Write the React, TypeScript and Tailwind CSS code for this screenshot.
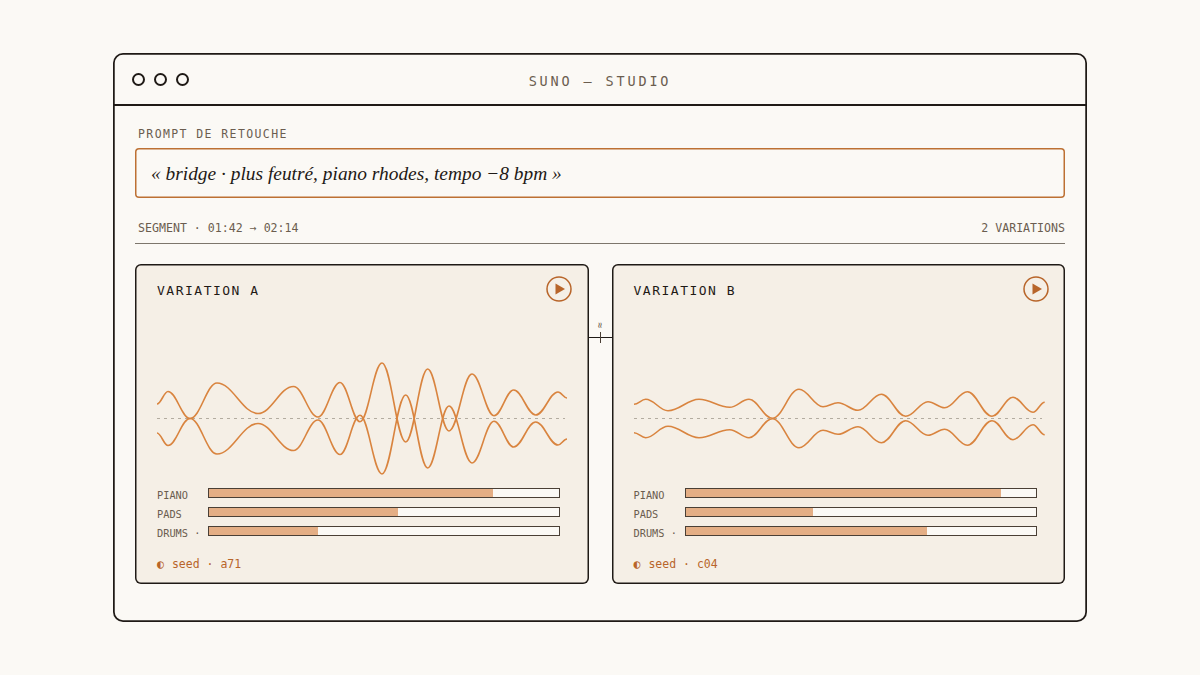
import React from "react";

type Point = [number, number];

const MID = 58.5;

// extremes of the upper curve, page x minus card left, y relative to the svg
const toLocal = (pts: Point[], x0: number): Point[] =>
  pts.map(([x, y]) => [x - x0, y - 360]);

const curveA: Point[] = [
  [157, 404], [168, 391.5], [190, 418.5], [217, 383], [258, 413.5], [293.5, 386.5],
  [318, 417], [340, 382.5], [360, 421.7], [382, 363], [405.7, 442], [427.7, 369],
  [449, 431], [472, 374], [494, 415.7], [513.7, 390], [535.7, 415], [558, 392], [567, 398],
];

const curveB: Point[] = [
  [633.3, 404.3], [645, 399.3], [667.3, 410.7], [698.3, 399.3], [729, 407.3], [748.3, 399.3],
  [771.7, 418.3], [798.3, 389.3], [822.3, 406.7], [837.3, 402.7], [857.3, 410.3],
  [880.7, 394.3], [905, 416.3], [927.3, 401.7], [944, 407.7], [966.7, 391.7],
  [991.3, 416.3], [1012.3, 397.3], [1032.3, 412.3], [1044, 402.3],
];

// horizontal tangents at every extreme
const smoothPath = (pts: Point[]) => {
  let d = `M${pts[0][0]} ${pts[0][1]}`;
  for (let i = 1; i < pts.length; i++) {
    const [x0, y0] = pts[i - 1];
    const [x1, y1] = pts[i];
    const k = (x1 - x0) * 0.38;
    d += ` C${x0 + k} ${y0} ${x1 - k} ${y1} ${x1} ${y1}`;
  }
  return d;
};

const mirror = (pts: Point[]): Point[] => pts.map(([x, y]) => [x, 2 * MID - y]);

const Waveform: React.FC<{ points: Point[] }> = ({ points }) => (
  <svg width="414" height="118" viewBox="0 0 414 118" className="block" fill="none">
    <line x1="0" y1={MID} x2="408" y2={MID} stroke="#b3aca0" strokeWidth="1.2" strokeDasharray="3 4" />
    <path d={smoothPath(points)} stroke="#d9843f" strokeWidth="1.6" />
    <path d={smoothPath(mirror(points))} stroke="#d9843f" strokeWidth="1.6" />
  </svg>
);

const PlayIcon = () => (
  <svg width="26" height="26" viewBox="0 0 26 26" fill="none">
    <circle cx="13" cy="13" r="12" stroke="#b8652a" strokeWidth="1.5" />
    <path d="M9.5 7.5 L19 13 L9.5 18.5 Z" fill="#b8652a" />
  </svg>
);

interface VariationProps {
  name: string;
  seed: string;
  points: Point[];
  stems: { label: string; value: number }[];
}

const VariationCard: React.FC<VariationProps> = ({ name, seed, points, stems }) => (
  <div className="flex h-[320px] w-[453.5px] flex-col rounded-[6px] bg-[#f5efe6] pl-[22px] pr-[16.5px] shadow-[inset_0_0_0_1.5px_#1f1a16]">
    <div className="flex items-start justify-between pt-[11.5px]">
      <span className="pt-[6px] text-[13px] leading-[18px] tracking-[1.5px] text-[#1f1a16]">{name}</span>
      <PlayIcon />
    </div>
    <div className="mt-[58.5px]">
      <Waveform points={toLocal(points, points[0][0])} />
    </div>
    <div className="mt-[10px] flex flex-col gap-[9px]">
      {stems.map((stem) => (
        <div key={stem.label} className="flex h-[10px] items-center">
          <span className="w-[51px] translate-y-[2px] whitespace-nowrap text-[10.3px] leading-[10px] text-[#6b5d4f]">
            {stem.label}
          </span>
          <div className="h-[10px] w-[352px] border border-[#4a3f35] bg-[#fbf9f5]">
            <div className="h-full bg-[#e4ae85]" style={{ width: `${stem.value}%` }} />
          </div>
        </div>
      ))}
    </div>
    <div className="mt-[20px] text-[11.5px] leading-[16px] text-[#b8652a]">
      <span className="mr-[8px]">◐</span>
      {seed}
    </div>
  </div>
);

export default function App() {
  return (
    <div className="flex h-[675px] w-[1200px] items-start justify-center bg-[#fbf9f5] pt-[53px] font-['DejaVu_Sans_Mono',monospace]">
      <div className="h-[569px] w-[974px] rounded-[10px] shadow-[inset_0_0_0_1.75px_#1f1a16]">
        <header className="relative flex h-[53px] items-center justify-center border-b-2 border-[#1f1a16] pt-[6px]">
          <div className="absolute left-[19px] top-[20px] flex gap-[9px]">
            <span className="h-[13px] w-[13px] rounded-full border-2 border-[#1f1a16]" />
            <span className="h-[13px] w-[13px] rounded-full border-2 border-[#1f1a16]" />
            <span className="h-[13px] w-[13px] rounded-full border-2 border-[#1f1a16]" />
          </div>
          <span className="text-[13.5px] tracking-[2.85px] text-[#6b5d4f]">SUNO — STUDIO</span>
        </header>

        <div className="px-[22px]">
          <div className="mt-[20px] pl-[3px] text-[11.5px] leading-[16px] tracking-[1.4px] text-[#6b5d4f]">
            PROMPT DE RETOUCHE
          </div>
          <div className="mt-[6px] flex h-[50px] items-center rounded-[4px] pl-[16px] pt-[2px] font-['Liberation_Serif',serif] text-[19.4px] italic text-[#1f1a16] shadow-[inset_0_0_0_1.5px_#bd7033]">
            « bridge · plus feutré, piano rhodes, tempo −8 bpm »
          </div>
          <div className="mt-[22px] flex h-[24px] items-start justify-between border-b border-[#7d766c] pl-[3px] text-[11.6px] leading-[16px] text-[#6b5d4f]">
            <span>SEGMENT · 01:42 → 02:14</span>
            <span>2 VARIATIONS</span>
          </div>

          <div className="mt-[20px] flex">
            <VariationCard
              name="VARIATION A"
              seed="seed · a71"
              points={curveA}
              stems={[
                { label: "PIANO", value: 81 },
                { label: "PADS", value: 54 },
                { label: "DRUMS ·", value: 31 },
              ]}
            />
            <div className="relative w-[23px]">
              <div className="mt-[73px] h-px bg-[#1f1a16]" />
              <div className="absolute left-[11px] top-[68px] h-[11px] w-[1.5px] bg-[#4a3f35]" />
              <span className="absolute left-[8px] top-[56px] rotate-90 text-[10px] leading-[10px] text-[#6b5d4f]">≈</span>
            </div>
            <VariationCard
              name="VARIATION B"
              seed="seed · c04"
              points={curveB}
              stems={[
                { label: "PIANO", value: 90 },
                { label: "PADS", value: 36.5 },
                { label: "DRUMS ·", value: 69 },
              ]}
            />
          </div>
        </div>
      </div>
    </div>
  );
}
